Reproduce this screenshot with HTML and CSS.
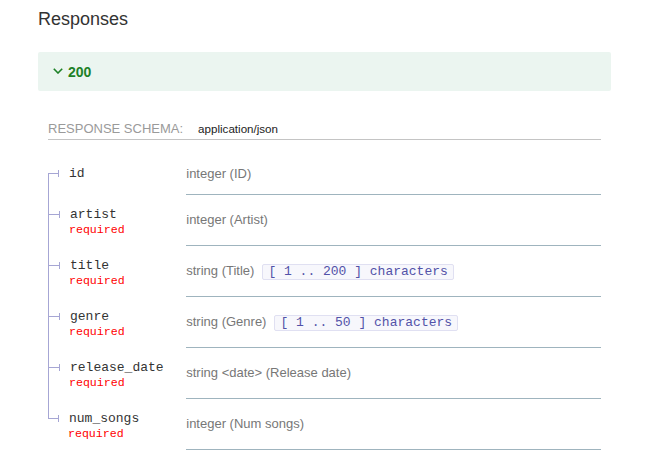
FILE: index.html
```html
<!DOCTYPE html>
<html lang="en">
<head>
<meta charset="utf-8">
<title>Responses</title>
<link rel="stylesheet" href="styles.css">
</head>
<body>
<div class="page">
  <h3 class="title">Responses</h3>
  <div class="resp">
    <div class="resp-head">
      <svg class="chev" width="10" height="6" viewBox="0 0 10 6"><polyline points="0.8,0.8 5,5 9.2,0.8" fill="none" stroke="#1d8127" stroke-width="1.6"/></svg>
      <strong>200</strong>
    </div>
    <div class="resp-body">
      <div class="schema-head"><span class="schema-label">Response Schema:</span><span class="media">application/json</span></div>
      <table class="props">
        <tr class="first">
          <td class="name-cell"><span class="bullet"></span><span class="pname">id</span></td>
          <td class="details">integer (ID)</td>
        </tr>
        <tr>
          <td class="name-cell"><span class="bullet"></span><span class="pname">artist</span><div class="req">required</div></td>
          <td class="details">integer (Artist)</td>
        </tr>
        <tr>
          <td class="name-cell"><span class="bullet"></span><span class="pname">title</span><div class="req">required</div></td>
          <td class="details">string (Title)<span class="constraint">[ 1 .. 200 ] characters</span></td>
        </tr>
        <tr>
          <td class="name-cell"><span class="bullet"></span><span class="pname">genre</span><div class="req">required</div></td>
          <td class="details">string (Genre)<span class="constraint">[ 1 .. 50 ] characters</span></td>
        </tr>
        <tr>
          <td class="name-cell"><span class="bullet"></span><span class="pname">release_date</span><div class="req">required</div></td>
          <td class="details">string &lt;date&gt; (Release date)</td>
        </tr>
        <tr class="last">
          <td class="name-cell"><span class="bullet"></span><span class="pname">num_songs</span><div class="req">required</div></td>
          <td class="details">integer (Num songs)</td>
        </tr>
      </table>
    </div>
  </div>
</div>
</body>
</html>
```
FILE: styles.css
```css
body {
  margin: 0;
  background: #fff;
  font-family: "Liberation Sans", Arial, sans-serif;
}
.page {
  width: 573px;
  margin-left: 38px;
  padding-top: 8px;
}
.title {
  margin: 0 0 22px;
  font-size: 18px;
  line-height: 22px;
  font-weight: 400;
  color: #333;
}
.resp-head {
  display: flex;
  align-items: center;
  height: 39px;
  padding: 0 15px;
  background: #ebf5f0;
  border-radius: 2px;
  color: #1d8127;
  font-size: 14px;
}
.chev {
  margin-right: 5px;
  margin-top: -1px;
}
.resp-body {
  padding: 28px 10px 0;
}
.schema-head {
  display: flex;
  align-items: baseline;
  line-height: 20px;
  border-bottom: 1px solid #c4c4c4;
}
.schema-label {
  font-size: 13px;
  text-transform: uppercase;
  color: #9a9a9a;
  margin-right: 15px;
}
.media {
  font-size: 11.6px;
  color: #222;
}
.props {
  width: 100%;
  margin-top: 14px;
  border-spacing: 0;
}
.name-cell {
  width: 25%;
  vertical-align: top;
  white-space: nowrap;
  padding: 10px 10px 11px 0;
  border-left: 1px solid #a6a6d4;
  font-family: "Liberation Mono", "Courier New", monospace;
  font-size: 13px;
  line-height: 20px;
  color: #333;
}
.first .name-cell,
.last .name-cell {
  border-left-width: 0;
  background-repeat: no-repeat;
  background-position: top left;
  background-size: 1px 100%;
}
.first .name-cell {
  background-image: linear-gradient(to bottom, transparent 20px, #a6a6d4 20px);
}
.last .name-cell {
  background-image: linear-gradient(to bottom, #a6a6d4 20px, transparent 20px);
}
.bullet {
  margin-right: 10px;
}
.bullet::before {
  content: "";
  display: inline-block;
  vertical-align: middle;
  width: 10px;
  height: 1px;
  background: #a6a6d4;
}
.bullet::after {
  content: "";
  display: inline-block;
  vertical-align: middle;
  width: 1px;
  height: 7px;
  background: #a6a6d4;
}
.req {
  margin-left: 20px;
  font-size: 11.6px;
  line-height: 10px;
  color: #f00;
}
.details {
  width: 75%;
  vertical-align: middle;
  padding: 10px 0;
  border-bottom: 1px solid #9fb4be;
  font-size: 13px;
  line-height: 20px;
  color: #777;
}
.constraint {
  display: inline-block;
  margin-left: 8px;
  padding: 0 5px;
  border: 1px solid #e0e0f2;
  border-radius: 2px;
  background: #f7f7fc;
  font-family: "Liberation Mono", "Courier New", monospace;
  font-size: 13px;
  line-height: 14px;
  color: #5252a8;
  vertical-align: middle;
}
```
